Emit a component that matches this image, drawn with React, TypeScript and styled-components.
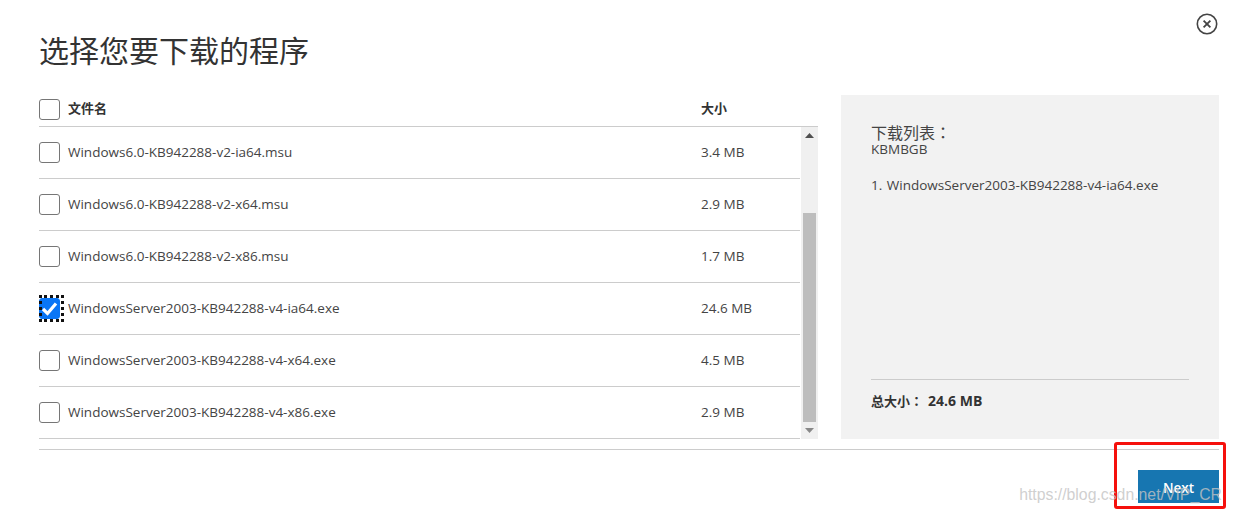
import { FC } from 'react';
import styled, { createGlobalStyle } from 'styled-components';

const FONT = '"Open Sans", "Noto Sans CJK SC", sans-serif';

const GlobalStyle = createGlobalStyle`
    html, body {
        margin: 0;
        background: #fff;
    }
    body {
        font-family: ${FONT};
        color: #333;
    }
`;

const Page = styled.div`
    position: relative;
    box-sizing: border-box;
    width: 1234px;
    height: 514px;
    padding: 0 15px 0 39px;
    overflow: hidden;
`;

const CloseButton = styled.button`
    position: absolute;
    top: 13px;
    right: 16px;
    width: 22px;
    height: 22px;
    padding: 0;
    border: 0;
    background: none;
    color: #444;
`;

const Title = styled.h1`
    margin: 0;
    padding-top: 28px;
    height: 95px;
    box-sizing: border-box;
    font-size: 30px;
    line-height: 42px;
    font-weight: 400;
    font-family: "Noto Sans CJK SC", sans-serif;
    color: #333;
`;

const Body = styled.div`
    display: flex;
    gap: 23px;
    width: 1180px;
`;

const ListPane = styled.div`
    width: 779px;
`;

const HeaderRow = styled.div`
    display: flex;
    align-items: center;
    height: 29px;
    padding-bottom: 2px;
    border-bottom: 1px solid #ccc;
    font-size: 13px;
    font-weight: 700;
    font-family: "Noto Sans CJK SC", sans-serif;
    color: #333;
`;

const ListBody = styled.div`
    display: flex;
`;

const Rows = styled.div`
    width: 761px;
    margin-right: 1px;
`;

const Row = styled.div`
    display: flex;
    align-items: center;
    height: 51px;
    border-bottom: 1px solid #ccc;
    font-size: 13.5px;
    color: #444;
`;

const Check = styled.span<{ $checked?: boolean }>`
    position: relative;
    flex: none;
    box-sizing: border-box;
    display: flex;
    align-items: center;
    justify-content: center;
    width: 21px;
    height: 21px;
    border: 1px solid ${(p) => (p.$checked ? '#0a76f6' : '#767676')};
    border-radius: 3px;
    background: ${(p) => (p.$checked ? '#0a76f6' : '#fff')};
    color: #fff;
    &::before {
        content: ${(p) => (p.$checked ? '""' : 'none')};
        position: absolute;
        top: -4px;
        left: -1px;
        width: 25px;
        height: 27px;
        box-sizing: border-box;
        border: 3px dotted #111;
    }
`;

const CheckMark = styled.svg`
    position: relative;
`;

const NameCell = styled.span`
    flex: none;
    width: 633px;
    margin-left: 8px;
    padding-bottom: 2px;
    white-space: nowrap;
`;

const SizeCell = styled.span`
    padding-bottom: 2px;
    white-space: nowrap;
`;

const HeaderName = styled(NameCell)`
    padding-bottom: 4px;
`;

const HeaderSize = styled(SizeCell)`
    padding-bottom: 4px;
`;

const Scrollbar = styled.div`
    display: flex;
    flex-direction: column;
    align-items: center;
    width: 17px;
    background: #f0f0f0;
`;

const ArrowSlot = styled.div`
    display: flex;
    align-items: center;
    justify-content: center;
    height: 17px;
    flex: none;
`;

const Arrow = styled.svg<{ $muted?: boolean }>`
    width: 9px;
    height: 5px;
    fill: ${(p) => (p.$muted ? '#888' : '#505050')};
`;

const Track = styled.div`
    flex: 1;
    width: 13px;
    padding-top: 69px;
    display: flex;
`;

const Thumb = styled.div`
    flex: 1;
    background: #bdbdbd;
`;

const Panel = styled.aside`
    display: flex;
    flex-direction: column;
    box-sizing: border-box;
    width: 378px;
    height: 344px;
    padding: 27px 30px 0;
    background: #f2f2f2;
    font-size: 13.5px;
    color: #444;
`;

const PanelTitle = styled.div`
    font-size: 16px;
    line-height: 20px;
    font-family: "Noto Sans CJK SC", sans-serif;
`;

const Colon = styled.span`
    font-family: "Noto Sans CJK TC", sans-serif;
`;

const PanelUnit = styled.div`
    line-height: 14px;
`;

const PanelItem = styled.div`
    margin-top: 19px;
    line-height: 20px;
    word-spacing: 1px;
    white-space: nowrap;
`;

const PanelTotal = styled.div`
    margin-top: auto;
    height: 60px;
    box-sizing: border-box;
    padding-top: 11px;
    border-top: 1px solid #ccc;
    font-size: 13px;
    font-weight: 700;
    line-height: 20px;
    color: #333;
`;

const TotalValue = styled.span`
    margin-left: 5px;
    font-size: 14px;
`;

const Footer = styled.div`
    display: flex;
    justify-content: flex-end;
    width: 1180px;
    margin-top: 10px;
    padding-top: 20px;
    border-top: 1px solid #ccc;
`;

const NextButton = styled.button`
    width: 81px;
    height: 33px;
    padding: 3px 0 0;
    border: 0;
    background: #1776b1;
    color: #fff;
    font-family: ${FONT};
    font-size: 13.5px;
    font-weight: 600;
`;

const Annotation = styled.div`
    position: absolute;
    left: 1114px;
    top: 442px;
    width: 112px;
    height: 67px;
    box-sizing: border-box;
    border: 3px solid #f5100c;
    border-radius: 3px;
`;

const Watermark = styled.div`
    position: absolute;
    right: 12px;
    top: 484px;
    font-family: "Liberation Sans", sans-serif;
    font-size: 15.8px;
    line-height: 22px;
    white-space: nowrap;
    color: rgba(195, 195, 195, 0.8);
`;

interface IFile {
    name: string;
    size: string;
    checked?: boolean;
}

const files: IFile[] = [
    { name: 'Windows6.0-KB942288-v2-ia64.msu', size: '3.4 MB' },
    { name: 'Windows6.0-KB942288-v2-x64.msu', size: '2.9 MB' },
    { name: 'Windows6.0-KB942288-v2-x86.msu', size: '1.7 MB' },
    { name: 'WindowsServer2003-KB942288-v4-ia64.exe', size: '24.6 MB', checked: true },
    { name: 'WindowsServer2003-KB942288-v4-x64.exe', size: '4.5 MB' },
    { name: 'WindowsServer2003-KB942288-v4-x86.exe', size: '2.9 MB' },
];

const App: FC = (): JSX.Element => {
    return (
        <Page>
            <GlobalStyle />
            <CloseButton aria-label='close'>
                <svg width='22' height='22' viewBox='0 0 22 22' fill='none' stroke='currentColor'>
                    <circle cx='11' cy='11' r='9.7' strokeWidth='1.6' />
                    <path d='M7.6 7.6l6.8 6.8M14.4 7.6l-6.8 6.8' strokeWidth='1.8' />
                </svg>
            </CloseButton>
            <Title>选择您要下载的程序</Title>
            <Body>
                <ListPane>
                    <HeaderRow>
                        <Check />
                        <HeaderName>文件名</HeaderName>
                        <HeaderSize>大小</HeaderSize>
                    </HeaderRow>
                    <ListBody>
                        <Rows>
                            {files.map((file) => (
                                <Row key={file.name}>
                                    <Check $checked={file.checked}>
                                        {file.checked && (
                                            <CheckMark width='17' height='15' viewBox='0 0 17 15'>
                                                <path d='M2 8l4.5 4.5L15 2.5' fill='none' stroke='#fff' strokeWidth='3.2' />
                                            </CheckMark>
                                        )}
                                    </Check>
                                    <NameCell>{file.name}</NameCell>
                                    <SizeCell>{file.size}</SizeCell>
                                </Row>
                            ))}
                        </Rows>
                        <Scrollbar>
                            <ArrowSlot>
                                <Arrow viewBox='0 0 9 5'>
                                    <path d='M4.5 0L9 5H0z' />
                                </Arrow>
                            </ArrowSlot>
                            <Track>
                                <Thumb />
                            </Track>
                            <ArrowSlot>
                                <Arrow $muted viewBox='0 0 9 5'>
                                    <path d='M0 0h9L4.5 5z' />
                                </Arrow>
                            </ArrowSlot>
                        </Scrollbar>
                    </ListBody>
                </ListPane>
                <Panel>
                    <PanelTitle>下载列表<Colon>：</Colon></PanelTitle>
                    <PanelUnit>KBMBGB</PanelUnit>
                    <PanelItem>1. WindowsServer2003-KB942288-v4-ia64.exe</PanelItem>
                    <PanelTotal>
                        总大小<Colon>：</Colon>
                        <TotalValue>24.6 MB</TotalValue>
                    </PanelTotal>
                </Panel>
            </Body>
            <Footer>
                <NextButton>Next</NextButton>
            </Footer>
            <Annotation />
            <Watermark>https://blog.csdn.net/VIP_CR</Watermark>
        </Page>
    );
};

export default App;
